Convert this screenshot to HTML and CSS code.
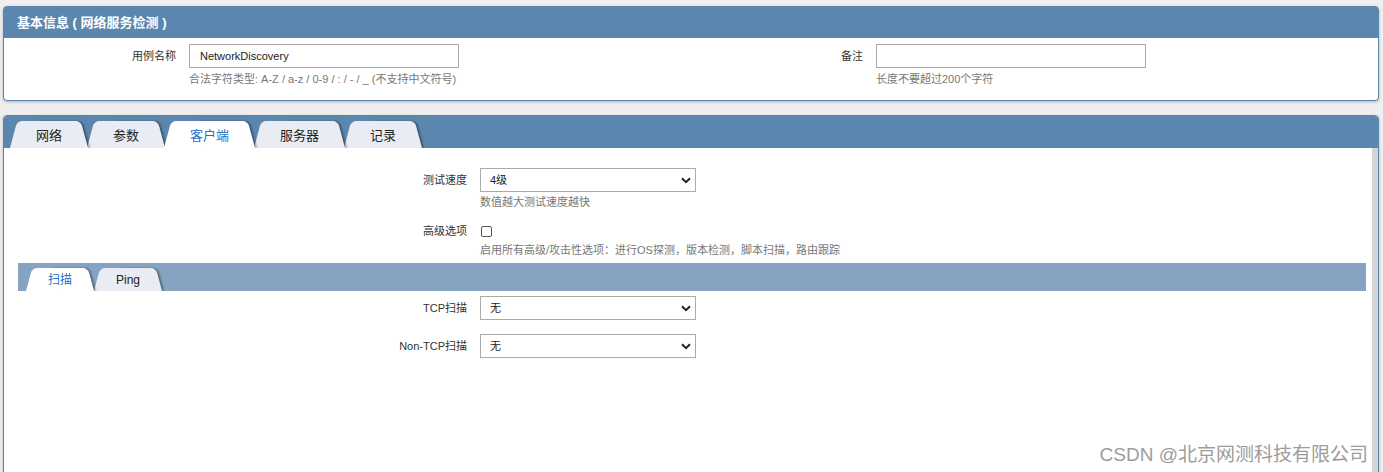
FILE: index.html
```html
<!DOCTYPE html>
<html lang="zh-CN">

<head>
  <meta charset="utf-8">
  <title>网络服务检测</title>
  <link rel="stylesheet" href="styles.css">
</head>

<body>
  <div class="panel info-panel">
    <div class="panel-head">基本信息 ( 网络服务检测 )</div>
    <div class="info-body">
      <div class="field">
        <label class="field-label">用例名称</label>
        <div class="field-ctrl">
          <input class="text-input" type="text" value="NetworkDiscovery">
          <div class="hint">合法字符类型: A-Z / a-z / 0-9 / : / - / _ (不支持中文符号)</div>
        </div>
      </div>
      <div class="field">
        <label class="field-label">备注</label>
        <div class="field-ctrl">
          <input class="text-input" type="text" value="">
          <div class="hint">长度不要超过200个字符</div>
        </div>
      </div>
    </div>
  </div>

  <div class="panel tab-panel">
    <div class="tabs">
      <div class="tab">网络</div>
      <div class="tab">参数</div>
      <div class="tab active">客户端</div>
      <div class="tab">服务器</div>
      <div class="tab">记录</div>
    </div>

    <div class="tab-body">
      <div class="row first-row">
        <label class="row-label">测试速度</label>
        <div class="row-ctrl">
          <div class="select-wrap">
            <select class="select">
              <option>4级</option>
            </select>
            <svg class="chevron" width="10" height="7" viewBox="0 0 10 7">
              <path d="M1 1.2 L5 5.2 L9 1.2" fill="none" stroke="#222" stroke-width="2" />
            </svg>
          </div>
          <div class="hint">数值越大测试速度越快</div>
        </div>
      </div>

      <div class="row check-row">
        <label class="row-label small-label">高级选项</label>
        <div class="row-ctrl">
          <div class="check-line"><input class="check" type="checkbox"></div>
          <div class="hint">启用所有高级/攻击性选项：进行OS探测，版本检测，脚本扫描，路由跟踪</div>
        </div>
      </div>

      <div class="sub-tabs">
        <div class="sub-tab active">扫描</div>
        <div class="sub-tab">Ping</div>
      </div>

      <div class="row scan-row">
        <label class="row-label">TCP扫描</label>
        <div class="row-ctrl">
          <div class="select-wrap">
            <select class="select">
              <option>无</option>
            </select>
            <svg class="chevron" width="10" height="7" viewBox="0 0 10 7">
              <path d="M1 1.2 L5 5.2 L9 1.2" fill="none" stroke="#222" stroke-width="2" />
            </svg>
          </div>
        </div>
      </div>

      <div class="row scan-row second-scan">
        <label class="row-label">Non-TCP扫描</label>
        <div class="row-ctrl">
          <div class="select-wrap">
            <select class="select">
              <option>无</option>
            </select>
            <svg class="chevron" width="10" height="7" viewBox="0 0 10 7">
              <path d="M1 1.2 L5 5.2 L9 1.2" fill="none" stroke="#222" stroke-width="2" />
            </svg>
          </div>
        </div>
      </div>
    </div>
  </div>

  <div class="watermark">CSDN @北京网测科技有限公司</div>
</body>

</html>
```

FILE: styles.css
```css
html,
body {
  height: 100%;
}

body {
  margin: 0;
  padding: 6px 4px 0 3px;
  box-sizing: border-box;
  position: relative;
  overflow: hidden;
  background-color: #efefef;
  font-family: 'Liberation Sans', 'Noto Sans CJK SC', sans-serif;
  font-size: 11px;
  color: #333;
}

.panel {
  background-color: #fff;
  border: 1px solid #5b87ae;
  border-radius: 4px;
  box-shadow: 0 1px 3px rgba(0, 0, 0, 0.25);
}

/* top panel */
.panel-head {
  background-color: #5b87ae;
  height: 31px;
  line-height: 31px;
  padding-left: 13px;
  color: #fff;
  font-size: 13px;
  font-weight: bold;
}

.info-body {
  display: flex;
  height: 56px;
  padding-top: 6px;
}

.field {
  flex: 1;
  display: flex;
}

.field-label {
  width: 185px;
  box-sizing: border-box;
  padding-right: 13px;
  text-align: right;
  line-height: 24px;
}

.text-input {
  display: block;
  width: 270px;
  height: 24px;
  box-sizing: border-box;
  border: 1px solid #aaa;
  padding: 0 10px;
  margin: 0;
  font-family: inherit;
  font-size: 11px;
  color: #222;
  outline: none;
}

.hint {
  margin-top: 4px;
  line-height: 15px;
  color: #777;
}

/* tab panel */
.tab-panel {
  margin-top: 14px;
  border-radius: 4px 4px 0 0;
  overflow: hidden;
}

.tabs {
  display: flex;
  align-items: flex-end;
  height: 32px;
  padding-left: 6px;
  background-color: #5b87ae;
  overflow: hidden;
}

.tab {
  position: relative;
  height: 27px;
  line-height: 29px;
  padding: 0 26px;
  margin-right: -1px;
  font-size: 13px;
  color: #222;
}

.tab::before,
.tab::after,
.sub-tab::before,
.sub-tab::after {
  content: '';
  position: absolute;
  top: 0;
  bottom: 0;
  width: 55%;
  background-color: #e9edf3;
  z-index: -1;
  transform-origin: bottom;
}

.tab::before,
.sub-tab::before {
  left: 0;
  border-radius: 5px 0 0 0;
  transform: skewX(-15deg);
}

.tab::after,
.sub-tab::after {
  right: 0;
  border-radius: 0 5px 0 0;
  transform: skewX(15deg);
  box-shadow: 2px 0 2px rgba(0, 0, 0, 0.35);
}

.tab:nth-child(1) { z-index: 5; }
.tab:nth-child(2) { z-index: 4; }
.tab:nth-child(3) { z-index: 3; }
.tab:nth-child(4) { z-index: 2; }
.tab:nth-child(5) { z-index: 1; }

.tab.active,
.sub-tab.active {
  z-index: 6;
  color: #1f6fc4;
}

.tab.active::before,
.tab.active::after,
.sub-tab.active::before,
.sub-tab.active::after {
  background-color: #fff;
}

/* grey strip on the right stands in for the scroll bar */
.tab-body {
  height: 330px;
  overflow: hidden;
  padding-top: 20px;
  box-sizing: border-box;
  border-right: 6px solid #d4d4d4;
}

.row {
  display: flex;
  align-items: flex-start;
}

.row-label {
  width: 476px;
  box-sizing: border-box;
  padding-right: 13px;
  text-align: right;
  line-height: 24px;
}

.row-ctrl .hint {
  margin-top: 3px;
}

.select-wrap {
  position: relative;
  width: 216px;
}

.select {
  display: block;
  width: 216px;
  height: 24px;
  margin: 0;
  padding: 0 20px 0 9px;
  border: 1px solid #aaa;
  border-radius: 0;
  background-color: #fff;
  appearance: none;
  -webkit-appearance: none;
  font-family: inherit;
  font-size: 11px;
  color: #222;
  outline: none;
}

.chevron {
  position: absolute;
  right: 5px;
  top: 9px;
}

.check-row {
  margin-top: 13px;
}

.small-label {
  line-height: 16px;
}

.check-line {
  height: 16px;
  display: flex;
  align-items: center;
}

.check {
  appearance: none;
  -webkit-appearance: none;
  width: 11px;
  height: 11px;
  margin: 0 0 0 1px;
  border: 1px solid #555;
  border-radius: 2px;
  background-color: #fff;
}

.check-row .hint {
  margin-top: 4px;
}

/* inner tabs */
.sub-tabs {
  display: flex;
  align-items: flex-end;
  height: 28px;
  margin: 5px 6px 0 14px;
  padding-left: 8px;
  background-color: #86a3c1;
  overflow: hidden;
}

.sub-tab {
  position: relative;
  z-index: 1;
  height: 23px;
  line-height: 24px;
  padding: 0 22px;
  font-size: 12px;
  color: #222;
}

.scan-row {
  margin-top: 5px;
}

.second-scan {
  margin-top: 14px;
}

.watermark {
  position: absolute;
  right: 15px;
  bottom: 6px;
  font-size: 19px;
  color: #9c9c9c;
  text-shadow: 0 0 2px #fff, 0 0 2px #fff;
}
```
